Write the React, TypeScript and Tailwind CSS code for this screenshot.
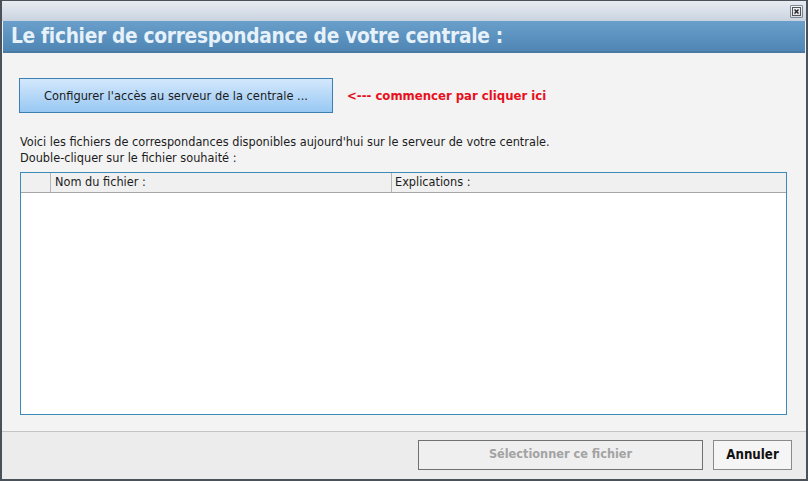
import React from "react";

export default function App() {
  const f = { fontFamily: '"DejaVu Sans Condensed", "DejaVu Sans", sans-serif' };
  return (
    <div className="w-[808px] h-[481px] bg-[#4b5159] p-[2px] pt-px pb-[2px] overflow-hidden" style={f}>
      <div className="w-full h-full flex flex-col bg-[#f3f3f3]">
        {/* title bar */}
        <div className="h-[20px] shrink-0 bg-gradient-to-b from-[#e8ecf2] to-[#c9d3df] flex items-center justify-end pr-[3px]">
          <div className="w-[13px] h-[13px] border border-[#7f8894] rounded-[1px] bg-gradient-to-b from-[#f4f6f8] to-[#d4dae2] flex items-center justify-center">
            <svg width="9" height="9" viewBox="0 0 9 9">
              <rect x="0.5" y="0.5" width="8" height="8" fill="none" stroke="#555" strokeWidth="1" />
              <path d="M2.5 2.5 L6.5 6.5 M6.5 2.5 L2.5 6.5" stroke="#222" strokeWidth="1.4" />
            </svg>
          </div>
        </div>
        {/* header band */}
        <div className="h-[32px] shrink-0 mx-px bg-gradient-to-b from-[#6a9fcb] to-[#4f86b4] border-b-2 border-[#4a7aa3] flex items-center pl-[8px]">
          <span className="text-[20.7px] font-bold text-[#e6f1fa] tracking-[-0.3px] leading-none">
            Le fichier de correspondance de votre centrale :
          </span>
        </div>
        {/* content */}
        <div className="flex-1 flex flex-col pl-[17px] pr-[19px]">
          <div className="mt-[25px] flex items-center">
            <button className="w-[314px] h-[35px] border border-[#3d7fb1] bg-gradient-to-b from-[#d3e8fc] to-[#98c8f3] text-[12.7px] text-[#1c1c1c]" style={f}>
              Configurer l'accès au serveur de la centrale ...
            </button>
            <span className="ml-[14px] text-[13px] font-bold text-[#e8101c]">&lt;--- commencer par cliquer ici</span>
          </div>
          <div className="mt-[21px] text-[12.6px] text-[#1c1c1c] leading-[16px] pl-px">
            <div>Voici les fichiers de correspondances disponibles aujourd'hui sur le serveur de votre centrale.</div>
            <div>Double-cliquer sur le fichier souhaité :</div>
          </div>
          <div className="mt-[6px] ml-px h-[243px] border border-[#3b8bb9] bg-white flex flex-col">
            <div className="h-[20px] shrink-0 bg-[#f0f0f0] border-b border-[#a5a5a5] flex text-[12.6px] text-[#1c1c1c]">
              <div className="w-[30px] border-r border-[#b5b5b5]" />
              <div className="w-[341px] border-r border-[#b5b5b5] pl-[4px] flex items-center">Nom du fichier :</div>
              <div className="flex-1 pl-[3px] flex items-center">Explications :</div>
            </div>
          </div>
        </div>
        {/* footer */}
        <div className="h-[48px] shrink-0 border-t border-[#c4c4c4] bg-[#ececec] flex items-center justify-end pr-[14px] pb-[2px]">
          <button className="w-[285px] h-[30px] border border-[#707070] bg-[#efefef] text-[12.6px] font-bold text-[#a3a3a3]" style={f}>
            Sélectionner ce fichier
          </button>
          <button className="ml-[10px] w-[79px] h-[30px] border border-[#8a8a8a] bg-[#f5f5f5] text-[13.2px] font-bold text-[#111]" style={f}>
            Annuler
          </button>
        </div>
      </div>
    </div>
  );
}
